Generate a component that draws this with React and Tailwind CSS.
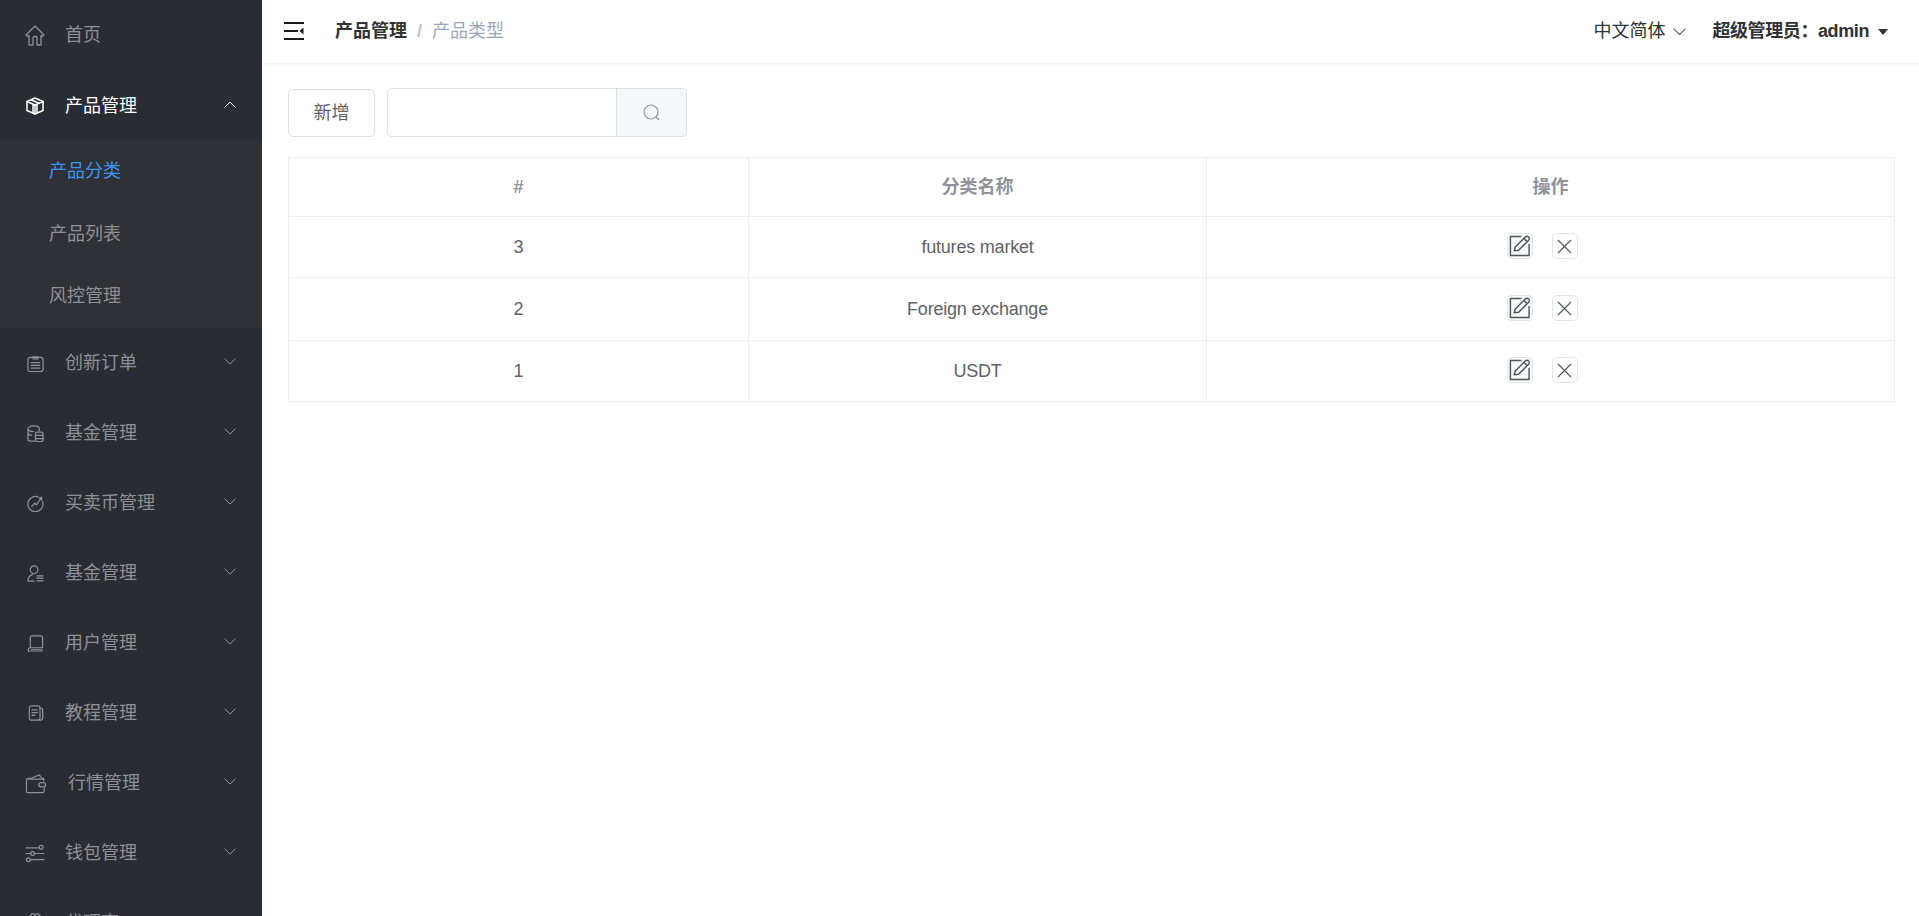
import React from "react";

const S = ({ children, w = 17, h = 17, vb = "0 0 18 18", sw = 1.3, nudge = "ml-[2px]" }) => (
  <svg width={w} height={h} viewBox={vb} className={nudge} fill="none" stroke="currentColor" strokeWidth={sw} strokeLinecap="round" strokeLinejoin="round">
    {children}
  </svg>
);

const Home = () => (
  <S w={20} h={21} vb="0 0 20 21" nudge="">
    <path d="M1 10 10 1l9 9-1.800 1.500-1.200-1V20h-4v-7a1.500 1.500 0 0 0-1.500-1.500h-1A1.500 1.500 0 0 0 8 13v7H4V10.500l-1.200 1z" />
  </S>
);
const Cube = () => (
  <S w={18} h={18} vb="0 0 18 18" nudge="ml-[1px]" sw={1.5}>
    <path d="M9 1 17 4.500v9L9 17 1 13.500v-9z" />
    <path d="M1 4.500 9 8l8-3.500M9 8v9M5 2.800 13 6.300M7 8v8M11 8v8" />
  </S>
);
const Clip = () => (
  <S>
    <rect x="1" y="2.500" width="16" height="15" rx="2.500" />
    <path d="M6.500 2h5v2h-5zM4.500 8h9M4.500 11h9M4.500 14h9" />
  </S>
);
const Db = () => (
  <S>
    <path d="M8 17H4c-1.700 0-3-.8-3-2V4c0-1.600 2.500-3 6-3s6 1.400 6 3v2M1 4c0 1.600 2.500 3 6 3M1 8.500c0 1.200 1.500 2.200 4 2.500" />
    <rect x="9" y="7.500" width="8" height="10" rx="2" />
    <path d="M9 11h8M9 14.500h8" />
  </S>
);
const Chart = () => (
  <S>
    <path d="M12 2.200A8 8 0 1 0 16.500 7" />
    <path d="M5 12 8.500 8.500 10 10.500 15 3M12.800 3.200 15.500 2.500V5.500" />
  </S>
);
const UserL = () => (
  <S>
    <circle cx="7.500" cy="5" r="4" />
    <path d="M1 17c0-4 2-6 5-7M1 17h6.500M10.500 11.500H17M10.500 14H17M10.500 16.800H17" />
  </S>
);
const Book = () => (
  <S>
    <path d="M3.500 13V3a2 2 0 0 1 2-2h9a2 2 0 0 1 2 2v10.500H3.500a2.200 2.200 0 0 0 0 4.500h13" />
    <path d="M4 15.800h12" />
  </S>
);
const Doc = () => (
  <S nudge="ml-[3px]" w={16} h={16}>
    <rect x="1.500" y="1" width="12" height="16" rx="2" />
    <path d="M13.500 3.500h1a2 2 0 0 1 2 2V15a2 2 0 0 1-2 2h-3M4.500 5.500h6M4.500 8.500h6M4.500 11.500h3" strokeWidth="1.500" />
  </S>
);
const Wallet = () => (
  <S w={22} h={21} vb="0 0 22 22" nudge="">
    <path d="M19 8V5.500H17L14.500 2 6 5.500H3A2 2 0 0 0 1 7.500V19a1.500 1.500 0 0 0 1.500 1.500h15.500a1.500 1.500 0 0 0 1.500-1.500V15.500" />
    <path d="M3 6.500h16" />
    <rect x="14" y="10" width="7" height="4.500" rx="2.200" />
  </S>
);
const Sliders = () => (
  <S w={20} h={19} vb="0 0 21 20" nudge="">
    <circle cx="17" cy="3.500" r="2" />
    <circle cx="8" cy="10" r="2" />
    <circle cx="3.500" cy="16.500" r="2" />
    <path d="M1 4h14M1 10h5M10 10h10M6 16.500h14" />
  </S>
);
const Gift = () => (
  <S w={20} h={20} vb="0 0 20 20" nudge="">
    <path d="M3 6h14v4H3zM10 6V2.500M6 2a2 2 0 0 1 4 2c0 1-1 2-2 2H5.500C4 6 3 4 6 2zM14 2a2 2 0 0 0-4 2c0 1 1 2 2 2h2.500C16 6 17 4 14 2z" />
  </S>
);
const Chevron = ({ up, size = 12 }) => (
  <svg width={size} height={size * 0.6} viewBox="0 0 12 7" fill="none" stroke="currentColor" strokeWidth="1">
    <path d={up ? "M.5 6.500 6 1l5.500 5.500" : "M.5.500 6 6 11.500.500"} />
  </svg>
);

const menus = [
  [Clip, "创新订单"],
  [Db, "基金管理"],
  [Chart, "买卖币管理"],
  [UserL, "基金管理"],
  [Book, "用户管理"],
  [Doc, "教程管理"],
  [Wallet, "行情管理", true],
  [Sliders, "钱包管理"],
  [Gift, "代理商"],
];

const Row = ({ Icon, label, active, up, chevron = true, shift }) => (
  <div className={`flex h-[70px] shrink-0 items-center pl-[25px] pr-[26px] text-[18px] ${active ? "pt-[2px] text-white" : "text-[#8d9097]"}`}>
    <span className="flex w-[40px] shrink-0 items-center">
      <Icon />
    </span>
    <span className={shift ? "ml-[3px]" : ""}>{label}</span>
    {chevron && (
      <span className="ml-auto flex -translate-y-[1px] items-center">
        <Chevron up={up} />
      </span>
    )}
  </div>
);

const rows = [
  ["3", "futures market", "h-[61px]"],
  ["2", "Foreign exchange", "h-[63px]"],
  ["1", "USDT", "h-[61px]"],
];

const EditIcon = () => (
  <span className="flex h-[26px] w-[26px] items-center justify-center rounded-[5px] border border-[#e4e5e8] bg-[#f8f9fb]">
    <svg width="22" height="22" viewBox="0 0 23 23" fill="none" stroke="#50555d" strokeWidth="1.500" strokeLinejoin="round">
      <path d="M21 9.500V21.500H1.500V1.500H13" />
      <path d="M5.500 16.500l1-4L17 2a1.800 1.800 0 0 1 3.500 3.500L10 16z" />
      <path d="M15.500 3.500l3 3" />
    </svg>
  </span>
);
const CloseIcon = () => (
  <span className="flex h-[26px] w-[26px] items-center justify-center rounded-[5px] border border-[#e4e5e8] bg-white">
    <svg width="15" height="15" viewBox="0 0 15 15" fill="none" stroke="#555a62" strokeWidth="1.200">
      <path d="M1 1l13 13M14 1 1 14" />
    </svg>
  </span>
);

export default function App() {
  return (
    <div
      className="flex h-[916px] w-full overflow-hidden bg-white"
      style={{ fontFamily: '"Liberation Sans", "Noto Sans CJK SC", sans-serif' }}
    >
      <aside className="flex h-full w-[262px] shrink-0 flex-col overflow-hidden bg-[#2a2c33]">
        <Row Icon={Home} label="首页" chevron={false} />
        <Row Icon={Cube} label="产品管理" active up />
        <div className="shrink-0 bg-[#303136] text-[18px] text-[#8d9097]">
          <div className="flex h-[63px] items-center pl-[49px] text-[#3a96f5]">产品分类</div>
          <div className="flex h-[62px] items-center pl-[49px]">产品列表</div>
          <div className="flex h-[63px] items-center pl-[49px]">风控管理</div>
        </div>
        {menus.map(([I, l, s], i) => (
          <Row key={i} Icon={I} label={l} shift={s} />
        ))}
      </aside>
      <main className="flex min-w-0 flex-1 flex-col">
        <header className="flex h-[63px] shrink-0 items-center pl-[22px] pr-[31px] shadow-[0_1px_4px_rgba(0,21,41,0.08)]">
          <svg width="20" height="18" viewBox="0 0 20 18" className="-translate-y-[1px]">
            <path d="M0 0h20v2H0zM0 8h14v2H0zM0 16h20v2H0z" fill="#1a1a1a" />
            <path d="M19.500 5.500v7L15.500 9z" fill="#1a1a1a" />
          </svg>
          <span className="ml-[31px] text-[18px] font-bold text-[#303133]">产品管理</span>
          <span className="mx-[10px] text-[18px] font-bold text-[#c0c4cc]">/</span>
          <span className="text-[18px] text-[#97a8be]">产品类型</span>
          <span className="ml-auto text-[18px] text-[#303133]">中文简体</span>
          <span className="ml-[8px] flex items-center text-[#555]">
            <Chevron size={13} />
          </span>
          <span className="ml-[26px] text-[18px] font-bold tracking-[-0.4px] text-[#303133]">超级管理员：admin</span>
          <span className="ml-[9px] h-0 w-0 border-x-[5.5px] border-t-[6px] border-x-transparent border-t-[#303133]" />
        </header>
        <div className="flex flex-col pl-[26px] pr-[24px] pt-[25px]">
          <div className="flex items-end gap-[12px]">
            <button className="h-[48px] w-[87px] rounded-[5px] border border-[#dcdfe6] pt-[1px] text-[18px] text-[#606266]">新增</button>
            <div className="flex h-[49px] w-[300px] rounded-[5px] border border-[#dcdfe6]">
              <div className="flex-1" />
              <div className="flex w-[70px] items-center justify-center rounded-r-[5px] border-l border-[#dcdfe6] bg-[#f5f7fa] text-[#909399]">
                <svg width="17" height="17" viewBox="0 0 17 17" fill="none" stroke="currentColor" strokeWidth="1.200">
                  <circle cx="8" cy="8" r="7" />
                  <path d="M13 13l3 3" />
                </svg>
              </div>
            </div>
          </div>
          <table className="mt-[20px] w-full table-fixed border-collapse border border-[#ebeef5] text-center text-[18px] text-[#606266]">
            <colgroup>
              <col className="w-[460px]" />
              <col className="w-[458px]" />
              <col />
            </colgroup>
            <thead>
              <tr className="h-[59px] font-bold text-[#909399]">
                <th className="border border-[#ebeef5]">#</th>
                <th className="border border-[#ebeef5]">分类名称</th>
                <th className="border border-[#ebeef5]">操作</th>
              </tr>
            </thead>
            <tbody>
              {rows.map((r, i) => (
                <tr key={i} className={r[2]}>
                  <td className="border border-[#ebeef5]">{r[0]}</td>
                  <td className="border border-[#ebeef5] tracking-[-0.2px]">{r[1]}</td>
                  <td className="border border-[#ebeef5]">
                    <div className="flex -translate-y-[1px] items-center justify-center gap-[19px] pr-[17px]">
                      <EditIcon />
                      <CloseIcon />
                    </div>
                  </td>
                </tr>
              ))}
            </tbody>
          </table>
        </div>
      </main>
    </div>
  );
}
